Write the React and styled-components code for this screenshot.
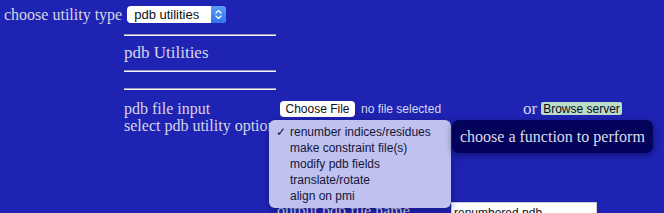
import React from "react";
import styled, { createGlobalStyle } from "styled-components";

const Global = createGlobalStyle`
  html, body { margin: 0; padding: 0; background: #1f23b4; }
  body { font-family: "Liberation Serif", "Times New Roman", serif; color: #d6d6e4; }
`;

const Page = styled.div`
  position: relative;
  width: 664px;
  height: 213px;
  overflow: hidden;
  background: #1f23b4;
`;

const TopRow = styled.div`
  display: flex;
  align-items: center;
  height: 29px;
  padding-left: 4px;
  gap: 5px;
`;

const SerifLabel = styled.span`
  font-size: 16px;
  color: #d6d6e4;
  white-space: nowrap;
`;

const FakeSelect = styled.div`
  display: flex;
  align-items: stretch;
  width: 99px;
  height: 17px;
  background: #fff;
  border-radius: 4px;
  overflow: hidden;
  font-family: "Liberation Sans", Arial, sans-serif;
  font-size: 13px;
  color: #111;
`;

const SelectText = styled.span`
  flex: 1;
  padding-left: 7px;
  line-height: 17px;
`;

const Stepper = styled.span`
  width: 15px;
  background: linear-gradient(#5a9cf8, #2f74ee);
  display: flex;
  align-items: center;
  justify-content: center;
`;

const Section = styled.div`
  margin-left: 124px;
  width: 152px;
  padding-top: 5px;
`;

const Rule = styled.div`
  height: 0;
  border-top: 1px solid #9a9ab8;
  border-bottom: 1px solid #f4f4f8;
  margin-bottom: ${(p) => p.$mb || 0}px;
`;

const Title = styled.div`
  font-size: 17px;
  height: 34px;
  line-height: 34px;
  color: #d6d6e4;
`;

const Form = styled.div`
  margin-left: 124px;
  margin-top: 10px;
  display: flex;
  flex-direction: column;
`;

const Row = styled.div`
  position: relative;
  display: flex;
  align-items: ${(p) => (p.$top ? "flex-start" : "center")};
  height: ${(p) => p.$h || 17}px;
  margin-left: ${(p) => p.$indent || 0}px;
  margin-top: ${(p) => p.$mt || 0}px;
`;

const RowLabel = styled.span`
  width: ${(p) => p.$w || 156}px;
  flex: none;
  font-size: 16px;
  line-height: 18px;
  white-space: nowrap;
  color: #d6d6e4;
  margin-top: ${(p) => p.$mt || 0}px;
`;

const FileButton = styled.span`
  display: inline-flex;
  align-items: center;
  justify-content: center;
  width: 75px;
  height: 16px;
  background: #fff;
  border-radius: 4px;
  font-family: "Liberation Sans", Arial, sans-serif;
  font-size: 12px;
  color: #111;
`;

const Hint = styled.span`
  font-family: "Liberation Sans", Arial, sans-serif;
  font-size: 12px;
  color: #d8d8e8;
  margin-left: 6px;
  width: 162px;
`;

const Or = styled.span`
  font-size: 17px;
  color: #d6d6e4;
  margin-right: 4px;
`;

const BrowseButton = styled.span`
  display: inline-flex;
  align-items: center;
  height: 13px;
  padding: 0 2px;
  background: #b9dcc6;
  border-radius: 2px;
  font-family: "Liberation Sans", Arial, sans-serif;
  font-size: 12px;
  color: #0a0a20;
`;

const Menu = styled.div`
  position: absolute;
  left: 145px;
  top: 3px;
  width: 182px;
  padding: 4px 0;
  background: #bfc2ef;
  border-radius: 6px;
  box-shadow: 0 2px 8px rgba(0, 0, 30, 0.35);
  z-index: 2;
  font-family: "Liberation Sans", Arial, sans-serif;
  font-size: 12px;
  color: #14143a;
`;

const MenuItem = styled.div`
  position: relative;
  height: 16px;
  line-height: 16px;
  padding-left: 21px;
  white-space: nowrap;
`;

const Check = styled.span`
  position: absolute;
  left: 7px;
  top: 0;
`;

const Tooltip = styled.div`
  position: absolute;
  left: 328px;
  top: 3px;
  width: 201px;
  height: 33px;
  box-sizing: border-box;
  padding-left: 8px;
  display: flex;
  align-items: center;
  background: #03035c;
  border-radius: 7px;
  box-shadow: 0 2px 6px rgba(0, 0, 40, 0.5);
  font-size: 16px;
  color: #dcdce8;
  white-space: nowrap;
  z-index: 2;
`;

const TextInput = styled.span`
  width: 146px;
  height: 20px;
  box-sizing: border-box;
  background: #fff;
  border: 1px solid #ccc;
  font-family: "Liberation Sans", Arial, sans-serif;
  font-size: 12px;
  color: #111;
  padding: 3px 2px;
  margin-top: 4px;
`;

const options = [
  "renumber indices/residues",
  "make constraint file(s)",
  "modify pdb fields",
  "translate/rotate",
  "align on pmi",
];

export default function App() {
  return (
    <Page>
      <Global />
      <TopRow>
        <SerifLabel>choose utility type</SerifLabel>
        <FakeSelect>
          <SelectText>pdb utilities</SelectText>
          <Stepper>
            <svg width="7" height="11" viewBox="0 0 7 11" fill="none" stroke="#fff" strokeWidth="1.3" strokeLinecap="round" strokeLinejoin="round">
              <path d="M1 4 L3.5 1.5 L6 4" />
              <path d="M1 7 L3.5 9.5 L6 7" />
            </svg>
          </Stepper>
        </FakeSelect>
      </TopRow>
      <Section>
        <Rule />
        <Title>pdb Utilities</Title>
        <Rule $mb={16} />
        <Rule />
      </Section>
      <Form>
        <Row>
          <RowLabel>pdb file input</RowLabel>
          <FileButton>Choose File</FileButton>
          <Hint>no file selected</Hint>
          <Or>or</Or>
          <BrowseButton>Browse server</BrowseButton>
        </Row>
        <Row>
          <RowLabel $w={145}>select pdb utility option</RowLabel>
          <Menu>
            {options.map((o, i) => (
              <MenuItem key={o}>
                {i === 0 && <Check>✓</Check>}
                {o}
              </MenuItem>
            ))}
          </Menu>
          <Tooltip>choose a function to perform</Tooltip>
        </Row>
        <Row $h={30} $indent={153} $mt={64} $top>
          <RowLabel $w={174} $mt={4}>output pdb file name</RowLabel>
          <TextInput>renumbered.pdb</TextInput>
        </Row>
      </Form>
    </Page>
  );
}
